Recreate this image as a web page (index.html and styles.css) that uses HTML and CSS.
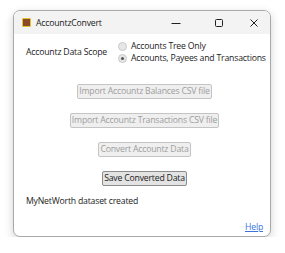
FILE: index.html
```html
<!DOCTYPE html>
<html lang="en">
  <head>
    <meta charset="UTF-8">
    <title>AccountzConvert</title>
    <link rel="stylesheet" href="styles.css">
  </head>
  <body>
    <div class="window">
        <div class="titlebar">
            <div class="app-icon"></div>
            <div class="title">AccountzConvert</div>
            <div class="controls">
                <svg class="ctl minimize" width="10" height="10" viewBox="0 0 10 10"><path d="M0.5 5.5h9" stroke="#222" stroke-width="1"/></svg>
                <svg class="ctl maximize" width="10" height="10" viewBox="0 0 10 10"><rect x="1.5" y="1.5" width="7" height="7" rx="1" fill="none" stroke="#222" stroke-width="1"/></svg>
                <svg class="ctl close" width="10" height="10" viewBox="0 0 10 10"><path d="M1.5 1.5L8.5 8.5M8.5 1.5L1.5 8.5" stroke="#222" stroke-width="1"/></svg>
            </div>
        </div>

        <div class="content">
            <div class="scope">
                <div class="scope-label">Accountz Data Scope</div>
                <div class="options">
                    <label class="option"><span class="radio"></span>Accounts Tree Only</label>
                    <label class="option"><span class="radio checked"></span>Accounts, Payees and Transactions</label>
                </div>
            </div>

            <div class="actions">
                <button class="btn" disabled>Import Accountz Balances CSV file</button>
                <button class="btn" disabled>Import Accountz Transactions CSV file</button>
                <button class="btn" disabled>Convert Accountz Data</button>
                <button class="btn active">Save Converted Data</button>
            </div>

            <p class="status">MyNetWorth dataset created</p>

            <div class="footer">
                <a href="#" class="help">Help</a>
            </div>
        </div>
    </div>
  </body>
</html>
```

FILE: styles.css
```css
body {
    margin: 0;
    padding: 10px 0 0 13px;
    background: #fff;
    font-family: 'Open Sans', 'Noto Sans', sans-serif;
    font-size: 8.7px;
    letter-spacing: -0.2px;
    color: #1b1b1b;
}

.window {
    width: 256px;
    height: 225px;
    border: 1px solid #a9a9a9;
    border-radius: 7px;
    overflow: hidden;
    background: #fff;
    box-shadow: 0 3px 10px rgba(0, 0, 0, 0.18);
    display: flex;
    flex-direction: column;
}

.titlebar {
    height: 23px;
    background: #f3f3f3;
    display: flex;
    align-items: center;
    padding-left: 8px;
    flex-shrink: 0;
}

.app-icon {
    width: 7px;
    height: 7px;
    background: #8a4a26;
    border: 1px solid #e3c23a;
    border-radius: 1px;
    margin-right: 5px;
}

.title {
    flex: 1;
}

.controls {
    display: flex;
    align-items: center;
    margin-right: 11px;
}

.ctl {
    display: block;
}

.maximize {
    margin-left: 33px;
}

.close {
    margin-left: 25px;
}

.content {
    flex: 1;
    display: flex;
    flex-direction: column;
    padding: 6px 7px 3px 12px;
}

.scope {
    display: flex;
    align-items: center;
}

.scope-label {
    width: 92px;
    flex-shrink: 0;
    white-space: nowrap;
}

.options {
    display: flex;
    flex-direction: column;
    flex-shrink: 0;
}

.option {
    display: flex;
    align-items: center;
    line-height: 12px;
    white-space: nowrap;
}

.radio {
    width: 9px;
    height: 9px;
    border: 1px solid #c9c9c9;
    border-radius: 50%;
    background: #e6e6e6;
    margin-right: 4px;
    box-sizing: border-box;
    position: relative;
}

.radio.checked::after {
    content: '';
    position: absolute;
    left: 2px;
    top: 2px;
    width: 3px;
    height: 3px;
    border-radius: 50%;
    background: #555;
}

.actions {
    display: flex;
    flex-direction: column;
    align-items: center;
    gap: 14px;
    margin-top: 20px;
}

.btn {
    font-family: inherit;
    font-size: 8.7px;
    letter-spacing: -0.2px;
    line-height: 13px;
    height: 15px;
    padding: 0 1px;
    border: 1px solid #c4c4c4;
    border-radius: 2px;
    background: #efefef;
    color: #9d9d9d;
}

.btn.active {
    border-color: #8c8c8c;
    background: #e3e3e3;
    color: #1b1b1b;
}

.status {
    margin: 9px 0 0;
}

.footer {
    margin-top: auto;
    display: flex;
    justify-content: flex-end;
}

.help {
    color: #3a72d8;
    text-decoration: underline;
}
```
